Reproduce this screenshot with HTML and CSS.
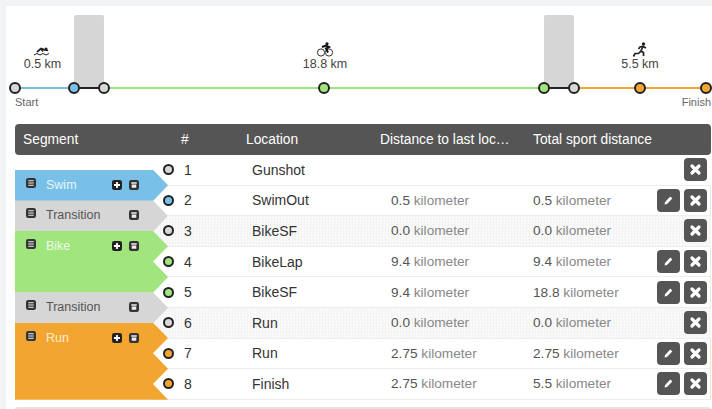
FILE: index.html
```html
<!DOCTYPE html>
<html lang="en">
<head>
<meta charset="utf-8">
<title>Segments</title>
<link rel="stylesheet" href="styles.css">
</head>
<body>
<svg class="defs" width="0" height="0" aria-hidden="true">
  <symbol id="i-list" viewBox="0 0 11 11"><rect width="11" height="11" rx="2.5" fill="#333"/><path d="M2.5 3h6M2.5 5.500h6M2.500 8h6" stroke="#eee" stroke-width="1.300"/></symbol>
  <symbol id="i-plus" viewBox="0 0 11 11"><rect width="11" height="11" rx="2.500" fill="#222"/><path d="M5.500 2.200v6.600M2.200 5.500h6.600" stroke="#fff" stroke-width="2"/></symbol>
  <symbol id="i-trash" viewBox="0 0 11 11"><rect width="11" height="11" rx="2.500" fill="#333"/><path d="M2.500 2.500h6v1.500h-6zM3 5h5v3.500h-5z" fill="#eee"/></symbol>
  <symbol id="i-x" viewBox="0 0 23 23"><path d="M8 8l7 7M15 8l-7 7" stroke="#fff" stroke-width="3.200" stroke-linecap="round"/></symbol>
  <symbol id="i-pen" viewBox="0 0 23 23"><path d="M7.500 15.500l.6-2.600 5.200-5.400 2 2-5.300 5.400z" fill="#fff"/></symbol>
</svg>
<main class="panel">
  <section class="timeline">
    <div class="leg leg-swim start">
      <div class="leg-label">
        <svg class="sport" width="18" height="11" viewBox="0 0 18 11"><circle cx="13" cy="3" r="1.600" fill="#222"/><path d="M4 6l4-3.500 4 1.500 3 .5M8 2.500l2 3" stroke="#222" stroke-width="1.700" fill="none"/><path d="M1 9l3-1.500 3 1.500 3-1.500 3 1.500 3-1.500" stroke="#222" stroke-width="1" fill="none"/></svg>
        <span>0.5 km</span>
      </div>
    </div>
    <div class="leg leg-trans"></div>
    <div class="leg leg-bike-a"></div>
    <div class="leg leg-bike-b">
      <div class="leg-label label-bike">
        <svg class="sport" width="18" height="15" viewBox="0 0 18 15"><circle cx="5" cy="10.500" r="3.600" stroke="#333" fill="none"/><circle cx="13" cy="10.500" r="3.600" stroke="#333" fill="none"/><circle cx="11" cy="1.800" r="1.600" fill="#111"/><path d="M6 5l4-1.500 3 1.500-3 1.500 2 4" stroke="#111" stroke-width="2" fill="none"/></svg>
        <span>18.8 km</span>
      </div>
    </div>
    <div class="leg leg-trans"></div>
    <div class="leg leg-run-a">
      <div class="leg-label label-run">
        <svg class="sport" width="16" height="15" viewBox="0 0 16 15"><circle cx="11.500" cy="2" r="1.700" fill="#222"/><path d="M14 6l-3-1.500-3 .5-1.500 2M11 4.500L9 9l2.500 1.500V14M9 9l-2.500 2.500H3L1.500 14.500" stroke="#222" stroke-width="1.700" fill="none"/></svg>
        <span>5.5 km</span>
      </div>
    </div>
    <div class="leg leg-run-b"></div>
  </section>
  <div class="ends"><span>Start</span><span>Finish</span></div>

  <section class="table">
    <header class="thead">
      <span>Segment</span>
      <span>#</span>
      <span>Location</span>
      <span class="th-dist">Distance to last location</span>
      <span>Total sport distance</span>
    </header>
    <div class="tbody">
      <div class="segments">
        <div class="seg seg-swim one"><svg class="ic"><use href="#i-list"/></svg><span class="seg-name">Swim</span><svg class="ic add"><use href="#i-plus"/></svg><svg class="ic del"><use href="#i-trash"/></svg></div>
        <div class="seg seg-trans one"><svg class="ic"><use href="#i-list"/></svg><span class="seg-name">Transition</span><svg class="ic del"><use href="#i-trash"/></svg></div>
        <div class="seg seg-bike two"><svg class="ic"><use href="#i-list"/></svg><span class="seg-name">Bike</span><svg class="ic add"><use href="#i-plus"/></svg><svg class="ic del"><use href="#i-trash"/></svg></div>
        <div class="seg seg-trans one"><svg class="ic"><use href="#i-list"/></svg><span class="seg-name">Transition</span><svg class="ic del"><use href="#i-trash"/></svg></div>
        <div class="seg seg-run three"><svg class="ic"><use href="#i-list"/></svg><span class="seg-name">Run</span><svg class="ic add"><use href="#i-plus"/></svg><svg class="ic del"><use href="#i-trash"/></svg></div>
      </div>
      <div class="rows">
        <div class="row"><i class="dot gray"></i><span>1</span><span>Gunshot</span><span></span><span></span><div class="acts"><button class="btn"><svg><use href="#i-x"/></svg></button></div></div>
        <div class="row edge-swim"><i class="dot blue"></i><span>2</span><span>SwimOut</span><span class="val"><b>0.5</b> kilometer</span><span class="val"><b>0.5</b> kilometer</span><div class="acts"><button class="btn"><svg><use href="#i-pen"/></svg></button><button class="btn"><svg><use href="#i-x"/></svg></button></div></div>
        <div class="row striped"><i class="dot gray"></i><span>3</span><span>BikeSF</span><span class="val"><b>0.0</b> kilometer</span><span class="val"><b>0.0</b> kilometer</span><div class="acts"><button class="btn"><svg><use href="#i-x"/></svg></button></div></div>
        <div class="row edge-bike"><i class="dot green"></i><span>4</span><span>BikeLap</span><span class="val"><b>9.4</b> kilometer</span><span class="val"><b>9.4</b> kilometer</span><div class="acts"><button class="btn"><svg><use href="#i-pen"/></svg></button><button class="btn"><svg><use href="#i-x"/></svg></button></div></div>
        <div class="row edge-bike"><i class="dot green"></i><span>5</span><span>BikeSF</span><span class="val"><b>9.4</b> kilometer</span><span class="val"><b>18.8</b> kilometer</span><div class="acts"><button class="btn"><svg><use href="#i-pen"/></svg></button><button class="btn"><svg><use href="#i-x"/></svg></button></div></div>
        <div class="row striped"><i class="dot gray"></i><span>6</span><span>Run</span><span class="val"><b>0.0</b> kilometer</span><span class="val"><b>0.0</b> kilometer</span><div class="acts"><button class="btn"><svg><use href="#i-x"/></svg></button></div></div>
        <div class="row edge-run"><i class="dot orange"></i><span>7</span><span>Run</span><span class="val"><b>2.75</b> kilometer</span><span class="val"><b>2.75</b> kilometer</span><div class="acts"><button class="btn"><svg><use href="#i-pen"/></svg></button><button class="btn"><svg><use href="#i-x"/></svg></button></div></div>
        <div class="row edge-run"><i class="dot orange"></i><span>8</span><span>Finish</span><span class="val"><b>2.75</b> kilometer</span><span class="val"><b>5.5</b> kilometer</span><div class="acts"><button class="btn"><svg><use href="#i-pen"/></svg></button><button class="btn"><svg><use href="#i-x"/></svg></button></div></div>
      </div>
    </div>
    <div class="foot"></div>
  </section>
</main>
</body>
</html>
```
FILE: styles.css
```css
*, *::before, *::after { box-sizing: border-box; }
html, body { margin: 0; height: 100%; overflow: hidden; }
body {
  width: 712px;
  height: 409px;
  background: #f2f3f5;
  padding: 6px 0 0 6px;
  font-family: "Liberation Sans", Arial, sans-serif;
  font-size: 14px;
  color: #333;
}
.defs { position: absolute; }
.panel { background: #fff; height: 403px; padding: 9px 1px 0 9px; }

/* timeline */
.timeline { display: flex; height: 74px; align-items: stretch; }
.leg { position: relative; flex: none; height: 74px; border-bottom: 2px solid; display: flex; flex-direction: column; justify-content: flex-end; align-items: center; }
.leg::after {
  content: "";
  position: absolute;
  right: -6px;
  bottom: -7px;
  width: 12px;
  height: 12px;
  border-radius: 50%;
  border: 2px solid #222;
  z-index: 2;
}
.leg-swim { width: 59px; border-color: #7bbddd; }
.leg-swim::after { background: #79c1e8; }
.start::before {
  content: "";
  position: absolute;
  left: -6px;
  bottom: -7px;
  width: 12px;
  height: 12px;
  border-radius: 50%;
  border: 2px solid #222;
  background: #d8d8d8;
}
.leg-trans { width: 30px; border-color: #222; background: #d6d6d6; border-radius: 2px 2px 0 0; }
.leg-trans::after { background: #d8d8d8; }
.leg-bike-a, .leg-bike-b { width: 220px; border-color: #9be27c; }
.leg-bike-a::after, .leg-bike-b::after { background: #a0e57e; }
.leg-run-a, .leg-run-b { width: 66px; border-color: #f3a531; }
.leg-run-a::after, .leg-run-b::after { background: #f3a531; }
.leg-label { display: flex; flex-direction: column; align-items: center; font-size: 12.5px; line-height: 15px; color: #444; padding-bottom: 15px; white-space: nowrap; }
.leg-swim .leg-label { margin-left: -4px; }
.label-bike { margin-left: -218px; }
.label-run { margin-left: 66px; }
.sport { display: block; }

.ends { display: flex; justify-content: space-between; font-size: 11px; line-height: 13px; color: #666; padding-top: 7px; height: 35px; }

/* table */
.thead, .row { display: grid; align-items: center; }
.thead {
  height: 31px;
  background: #555;
  color: #fff;
  border-radius: 4px;
  font-size: 13.8px;
  grid-template-columns: 158px 65px 134px 153px 1fr;
  padding-left: 8px;
}
.th-dist { overflow: hidden; white-space: nowrap; text-overflow: ellipsis; width: 132px; }
.tbody { display: flex; }
.segments { width: 153px; margin-right: -15px; padding-top: 15.3px; position: relative; z-index: 1; flex: none; }
.seg { display: flex; align-items: flex-start; padding: 8px 0 0 11px; line-height: 14px; font-size: 12.5px; margin-top: -0.5px; }
.seg .ic { width: 10px; height: 10px; flex: none; }
.seg-name { margin-left: 10px; flex: 1; }
.seg .add { margin-top: 2px; margin-right: 7px; }
.seg .del { margin-top: 2px; margin-right: 29px; }
.one { height: 31.1px; clip-path: polygon(0 0, 138px 0, 100% 50%, 138px 100%, 0 100%); }
.two { height: 61.7px; clip-path: polygon(0 0, 138px 0, 100% 15.3px, 138px 30.6px, 100% 45.9px, 138px 100%, 0 100%); }
.three { height: 77px; clip-path: polygon(0 0, 138px 0, 100% 15.3px, 138px 30.6px, 100% 45.9px, 138px 61.2px, 100% 100%, 0 100%); }
.seg-swim { background: #78c0e8; color: #e9f6fd; }
.seg-trans { background: #d6d6d6; color: #555; }
.seg-bike { background: #a0e57e; color: #eefbe8; }
.seg-run { background: #f3a531; color: #fdeccf; }

.rows { flex: 1; min-width: 0; }
.row {
  height: 30.6px;
  border-bottom: 1px solid #eee;
  grid-template-columns: 21px 68px 139px 142px 1fr auto;
  padding-left: 10px;
  border-right: 1px solid transparent;
}
.striped {
  background-color: #f8f8f8;
  background-image: conic-gradient(#f3f3f3 25%, #fcfcfc 0 50%, #f3f3f3 0 75%, #fcfcfc 0);
  background-size: 3px 3px;
}
.edge-swim { border-right-color: #d6ecf8; }
.edge-bike { border-right-color: #e2f7d8; }
.edge-run { border-right-color: #fbe6c4; }
.dot { display: block; width: 11px; height: 11px; border-radius: 50%; border: 2px solid #222; position: relative; z-index: 2; }
.gray { background: #d8d8d8; }
.blue { background: #79c1e8; }
.green { background: #a0e57e; }
.orange { background: #f3a531; }
.val { color: #888; font-size: 13.65px; }
.val b { font-weight: 400; color: #555; }
.acts { display: flex; gap: 4px; justify-content: flex-end; padding-right: 3px; }
.btn { width: 23px; height: 23px; border: 0; padding: 0; background: #555; border-radius: 4px; display: block; }
.btn svg { width: 23px; height: 23px; display: block; }
.foot { height: 2px; margin-top: 7px; background: #e4e4e4; border-radius: 3px 3px 0 0; }
```
